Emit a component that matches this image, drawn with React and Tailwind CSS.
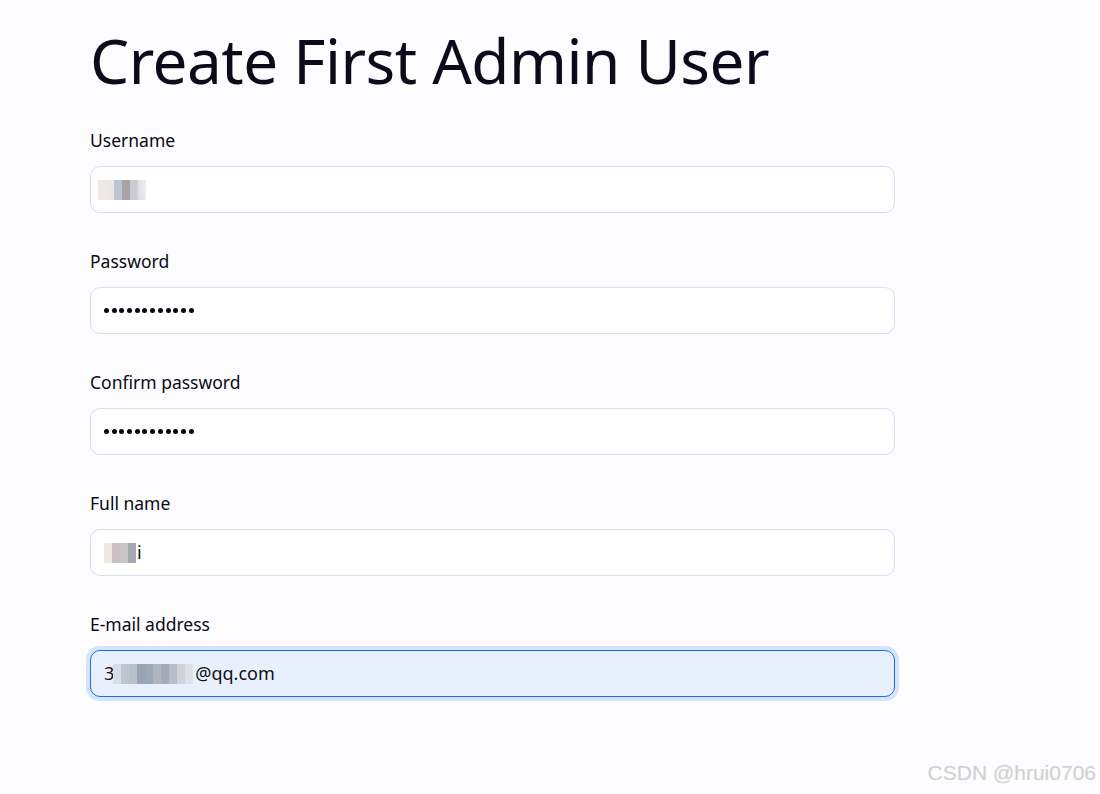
import React from "react";

const font = { fontFamily: '"Noto Sans", "Open Sans", sans-serif' };

function Box({ children, focused }) {
  return (
    <div
      className={
        focused
          ? "h-[47px] rounded-[10px] border border-[#1a6fe8] bg-[#e8f0fe] shadow-[0_0_0_4px_#d5e4fc] flex items-center pl-[13px] text-[18px] text-[#111]"
          : "h-[47px] rounded-[10px] border border-[#d9dcea] bg-white flex items-center pl-[13px] text-[18px] text-[#111]"
      }
    >
      {children}
    </div>
  );
}

function Field({ label, children, focused }) {
  return (
    <div className="flex flex-col">
      <div className="text-[17.5px] leading-[24px] text-[#0a0a14] mb-[14px]">{label}</div>
      <Box focused={focused}>{children}</Box>
    </div>
  );
}

function Dots() {
  return (
    <div className="flex gap-[2.7px] items-center">
      {Array.from({ length: 12 }).map((_, i) => (
        <span key={i} className="w-[5px] h-[5px] rounded-full bg-[#050510]" />
      ))}
    </div>
  );
}

function Mosaic({ cells, cls }) {
  return (
    <div className={"flex blur-[0.6px] " + (cls || "")}>
      {cells.map((c, i) => (
        <span key={i} style={{ background: c }} className="w-[8px] h-[20px]" />
      ))}
    </div>
  );
}

export default function App() {
  return (
    <div className="min-h-[794px] w-[1100px] bg-[#fdfcfe] relative" style={font}>
      <div className="pl-[90px] pt-[20px] w-[895px]">
        <h1 className="text-[62px] leading-[80px] font-normal text-[#0b0b1c] tracking-[-0.5px] mb-[28px]">
          Create First Admin User
        </h1>
        <div className="flex flex-col gap-[36px]">
          <Field label="Username">
            <div className="flex -ml-[6px] relative">
              <Mosaic cells={["#efe9e6", "#ece6e4", "#bcc6d0", "#aaa4a6", "#c9ccd4", "#dcdde2"]} />
              <span className="absolute left-[44px] top-[-2px] w-[60px] h-[24px] bg-white/60 blur-[4px]" />
            </div>
          </Field>
          <Field label="Password">
            <Dots />
          </Field>
          <Field label="Confirm password">
            <Dots />
          </Field>
          <Field label="Full name">
            <div className="flex items-center">
              <Mosaic cells={["#ece8e6", "#cbc1c2", "#c7c5c6", "#a6a8b4"]} cls="rounded-full" />
              <span className="ml-[1px]">i</span>
            </div>
          </Field>
          <Field label="E-mail address" focused>
            <div className="flex items-center">
              <span>3</span>
              <Mosaic
                cls="ml-[-1px] rounded-[8px]"
                cells={["#d8dde6", "#c0c6d0", "#b9c0cb", "#9aa3b3", "#9ba8b9", "#b0b6c1", "#a5abb8", "#b8bdc9", "#cfd3db", "#dde2ea"]}
              />
              <span className="ml-[2px]">@qq.com</span>
            </div>
          </Field>
        </div>
      </div>
      <div
        className="absolute right-[4px] bottom-[6px] text-[21px] text-[#d2d2d2]"
        style={{ fontFamily: '"Liberation Sans", sans-serif', textShadow: "0 0 1px #e8e8e8" }}
      >
        CSDN @hrui0706
      </div>
    </div>
  );
}
